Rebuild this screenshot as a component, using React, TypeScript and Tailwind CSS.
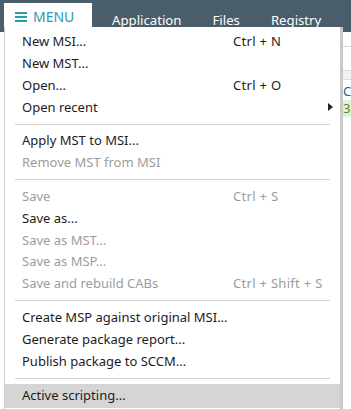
import React from "react";

type Item = { label: string; shortcut?: string; disabled?: boolean; submenu?: boolean; active?: boolean } | "sep";

const items: Item[] = [
  { label: "New MSI...", shortcut: "Ctrl + N" },
  { label: "New MST..." },
  { label: "Open...", shortcut: "Ctrl + O" },
  { label: "Open recent", submenu: true },
  "sep",
  { label: "Apply MST to MSI..." },
  { label: "Remove MST from MSI", disabled: true },
  "sep",
  { label: "Save", shortcut: "Ctrl + S", disabled: true },
  { label: "Save as..." },
  { label: "Save as MST...", disabled: true },
  { label: "Save as MSP...", disabled: true },
  { label: "Save and rebuild CABs", shortcut: "Ctrl + Shift + S", disabled: true },
  "sep",
  { label: "Create MSP against original MSI..." },
  { label: "Generate package report..." },
  { label: "Publish package to SCCM..." },
  "sep",
  { label: "Active scripting...", active: true },
];

const MenuRow = ({ item }: { item: Exclude<Item, "sep"> }) => (
  <div
    className={
      "flex items-center pl-[17px] pr-[10px] " +
      (item.active ? "bg-[#d5d5d5] h-[24px]" : "h-[21.8px]") +
      (item.disabled ? " text-[#9c9c9c]" : " text-[#1c1c1c]")
    }
  >
    <span className="flex-1">{item.label}</span>
    {item.shortcut && <span className="w-[97px] whitespace-nowrap tracking-[0.3px]">{item.shortcut}</span>}
    {item.submenu && (
      <svg width="5" height="8" viewBox="0 0 5 8" className="ml-auto -mr-[3px]">
        <path d="M0 0 L5 4 L0 8 Z" fill="#222" />
      </svg>
    )}
  </div>
);

export default function App() {
  return (
    <div className="relative w-[351px] h-[409px] overflow-hidden bg-white font-['Noto_Sans',sans-serif]">
      {/* top bar */}
      <div className="h-[32px] bg-[#4a5d6a] flex items-start pt-[3px] pl-[4px]">
        <div className="w-[88px] h-[29px] bg-white flex items-start pt-[6px] pl-[11px] gap-[6px] text-[#2a9aad]">
          <svg width="12" height="12" viewBox="0 0 12 12" className="mt-[2px]">
            <rect x="0" y="1" width="12" height="2" fill="#2a9aad" />
            <rect x="0" y="5" width="12" height="2" fill="#2a9aad" />
            <rect x="0" y="9" width="12" height="2" fill="#2a9aad" />
          </svg>
          <span className="text-[14px] leading-[16px]">MENU</span>
        </div>
        <div className="flex text-white text-[13.2px] leading-[16px] pt-[9px]">
          <span className="ml-[20px]">Application</span>
          <span className="ml-[31px]">Files</span>
          <span className="ml-[31px]">Registry</span>
        </div>
      </div>

      {/* table behind the menu */}
      <div className="ml-[343px] text-[13px] overflow-hidden">
        <div className="h-[15px] border-b border-[#dcdcdc]" />
        <div className="h-[24px] border-b border-[#dcdcdc]" />
        <div className="h-[9px] bg-[#f2f2f2] border-b border-[#dcdcdc]" />
        <div className="h-[20px] leading-[22px] text-[#1f5f9e] whitespace-nowrap">Co</div>
        <div className="h-[17px] leading-[17px] bg-[#e3f3d9] text-[#5a8a2a] whitespace-nowrap">37</div>
      </div>

      {/* dropdown menu */}
      <div className="absolute top-[27px] left-[4px] w-[336px] h-[390px] bg-white border-l border-[#cfcfcf] shadow-[3px_0_0_0_#c9c9c9] pt-[4px] text-[13px]">
        {items.map((item, i) =>
          item === "sep" ? (
            <div key={i} className="h-[12px] flex items-center pl-[10px] pr-[10px]">
              <div className="h-px w-full bg-[#d2d2d2]" />
            </div>
          ) : (
            <MenuRow key={i} item={item} />
          )
        )}
      </div>
    </div>
  );
}
